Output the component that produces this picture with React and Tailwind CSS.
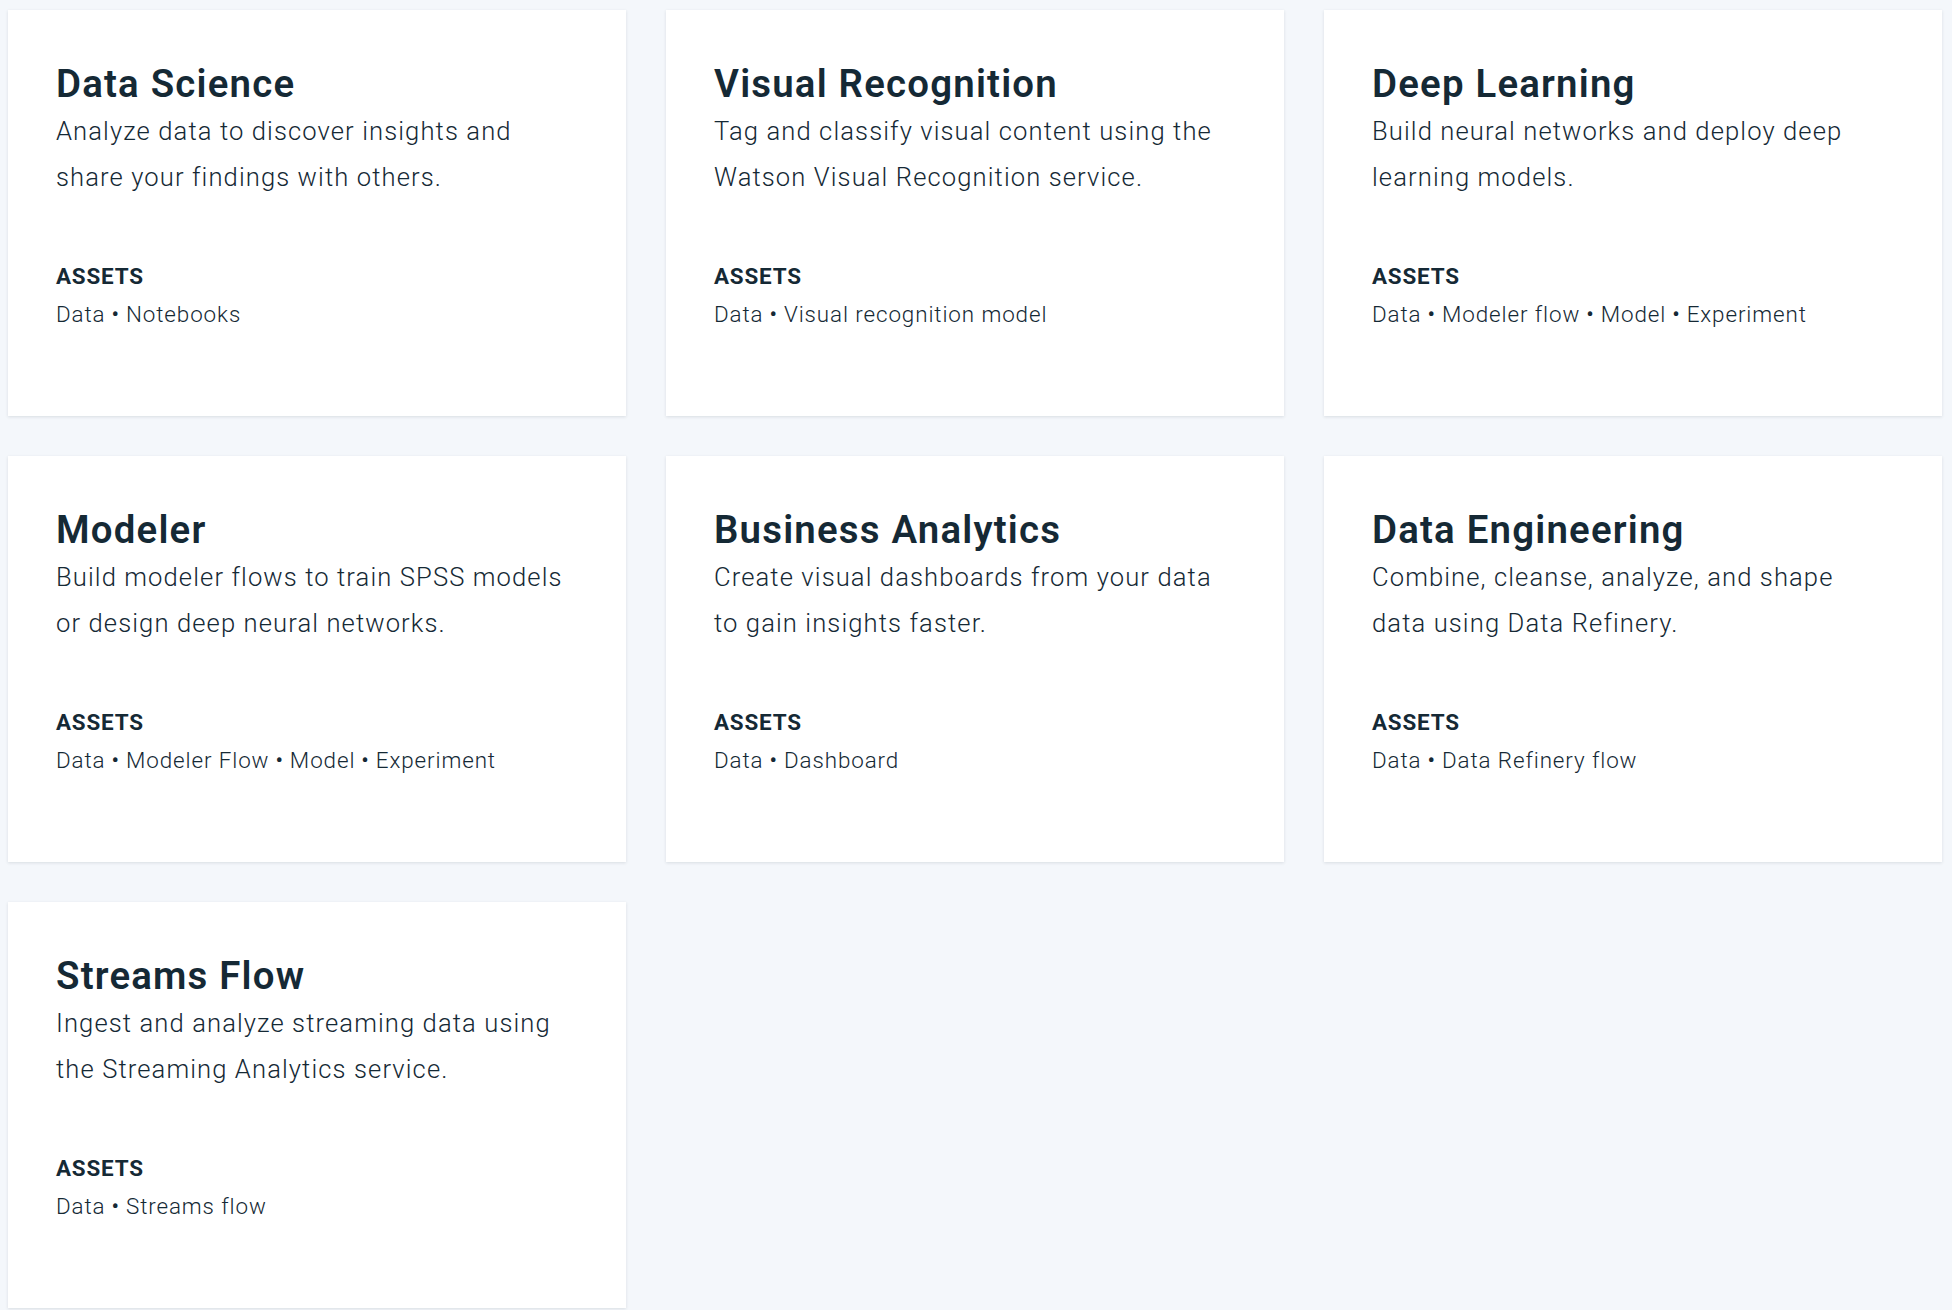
import React from "react";

const cards = [
  {
    title: "Data Science",
    desc: ["Analyze data to discover insights and", "share your findings with others."],
    assets: ["Data", "Notebooks"],
  },
  {
    title: "Visual Recognition",
    desc: ["Tag and classify visual content using the", "Watson Visual Recognition service."],
    assets: ["Data", "Visual recognition model"],
  },
  {
    title: "Deep Learning",
    desc: ["Build neural networks and deploy deep", "learning models."],
    assets: ["Data", "Modeler flow", "Model", "Experiment"],
  },
  {
    title: "Modeler",
    desc: ["Build modeler flows to train SPSS models", "or design deep neural networks."],
    assets: ["Data", "Modeler Flow", "Model", "Experiment"],
  },
  {
    title: "Business Analytics",
    desc: ["Create visual dashboards from your data", "to gain insights faster."],
    assets: ["Data", "Dashboard"],
  },
  {
    title: "Data Engineering",
    desc: ["Combine, cleanse, analyze, and shape", "data using Data Refinery."],
    assets: ["Data", "Data Refinery flow"],
  },
  {
    title: "Streams Flow",
    desc: ["Ingest and analyze streaming data using", "the Streaming Analytics service."],
    assets: ["Data", "Streams flow"],
  },
];

function Card({ card }) {
  return (
    <div className="h-[406px] bg-white px-[48px] pt-[50px] shadow-[0_1px_3px_rgba(21,41,53,0.12)]">
      <h2 className="text-[38.4px] leading-[48px] font-semibold tracking-[1.2px] whitespace-nowrap">
        {card.title}
      </h2>
      <p className="text-[25.6px] leading-[46px] font-light tracking-[1.1px]">
        {card.desc.map((l, i) => (
          <span key={i} className="block whitespace-nowrap">
            {l}
          </span>
        ))}
      </p>
      <div className="mt-[60px] text-[22.4px] leading-[32px] font-bold tracking-[0.8px]">ASSETS</div>
      <div className="mt-[6px] text-[22.4px] leading-[32px] font-light tracking-[0.9px] whitespace-nowrap">
        {card.assets.map((a, i) => (
          <React.Fragment key={i}>
            {i > 0 && <span className="mx-[6px] font-normal">•</span>}
            {a}
          </React.Fragment>
        ))}
      </div>
    </div>
  );
}

export default function App() {
  return (
    <div
      className="w-[1952px] h-[1310px] overflow-hidden bg-[#f4f7fb] text-[#152935] pl-[8px] pt-[10px]"
      style={{ fontFamily: "Roboto, 'Liberation Sans', sans-serif" }}
    >
      <div className="grid grid-cols-[618px_618px_618px] gap-[40px]">
        {cards.map((c) => (
          <Card key={c.title} card={c} />
        ))}
      </div>
    </div>
  );
}
